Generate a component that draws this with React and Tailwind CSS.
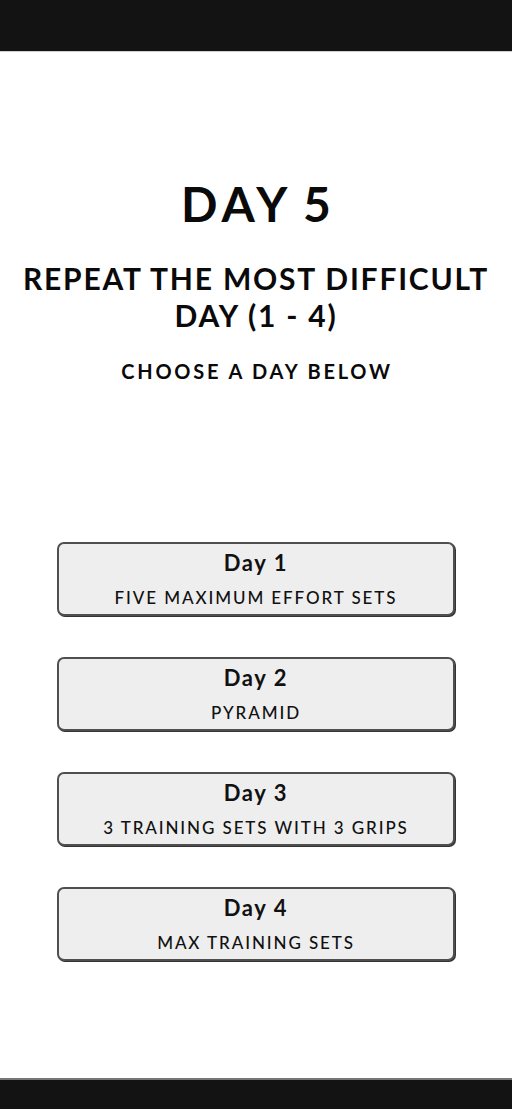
import React from 'react'

const days = [
  { title: 'Day 1', subtitle: 'FIVE MAXIMUM EFFORT SETS' },
  { title: 'Day 2', subtitle: 'PYRAMID' },
  { title: 'Day 3', subtitle: '3 TRAINING SETS WITH 3 GRIPS' },
  { title: 'Day 4', subtitle: 'MAX TRAINING SETS' },
]

function DayButton({ title, subtitle }) {
  return (
    <button className="w-[398px] h-[74px] flex flex-col items-center pt-[6px] rounded-[7px] border-2 border-[#4f4f4f] bg-[#eeeeee] shadow-[1px_1px_0_#333] text-[#111]">
      <span className="text-[22px] leading-[26px] font-bold tracking-[1.6px]">{title}</span>
      <span className="mt-[11px] text-[17px] leading-[22px] font-medium tracking-[1.9px]">{subtitle}</span>
    </button>
  )
}

export default function App() {
  return (
    <div className="w-[512px] h-[1109px] flex flex-col bg-white font-['Lato',sans-serif] text-[#0a0a0a]">
      <div className="h-[52px] bg-[#131313] border-b border-[#cfcfcf]" />
      <main className="flex-1 flex flex-col items-center">
        <h1 className="mt-[125px] pl-[5px] text-[48px] leading-[54px] font-bold tracking-[5px] [word-spacing:-4px]">DAY 5</h1>
        <h2 className="mt-[29px] text-[30px] leading-[37px] font-bold text-center tracking-[1.8px]">
          REPEAT THE MOST DIFFICULT
          <br />
          DAY (1 - 4)
        </h2>
        <p className="mt-[24px] pl-[2px] text-[20px] leading-[26px] font-bold tracking-[2.8px]">CHOOSE A DAY BELOW</p>
        <div className="mt-[158px] flex flex-col gap-[41px]">
          {days.map((d) => (
            <DayButton key={d.title} {...d} />
          ))}
        </div>
      </main>
      <div className="h-[31px] bg-[#131313] border-t-2 border-[#777]" />
    </div>
  )
}
